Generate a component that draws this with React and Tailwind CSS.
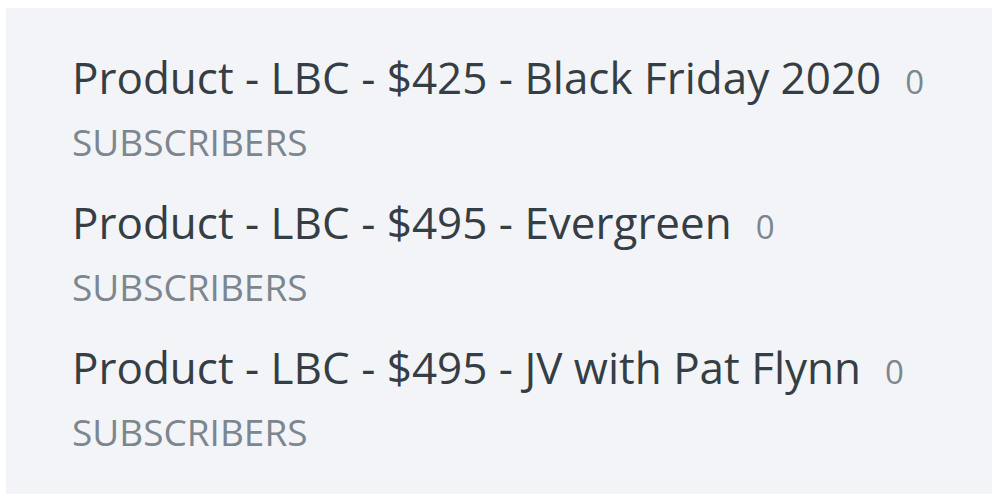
const products = [
  { name: "Product - LBC - $425 - Black Friday 2020", count: 0 },
  { name: "Product - LBC - $495 - Evergreen", count: 0 },
  { name: "Product - LBC - $495 - JV with Pat Flynn", count: 0 },
];

export default function App() {
  return (
    <div className="h-[503px] w-[1000px] bg-white px-[6px] pt-[8px] font-['Open_Sans',sans-serif]">
      <div className="h-[486px] w-[986px] bg-[#f3f4f8] pl-[66px] pt-[39px]">
        {products.map((p) => (
          <ProductRow key={p.name} name={p.name} count={p.count} />
        ))}
      </div>
    </div>
  );
}

function ProductRow({ name, count }) {
  return (
    <div className="h-[145px]">
      <div className="flex items-baseline">
        <span className="text-[44px] leading-[60px] text-[#363e45]">{name}</span>
        <span className="ml-[24px] text-[33px] text-[#7b868f]">{count}</span>
      </div>
      <div className="mt-[10px] text-[37px] leading-[50px] uppercase text-[#7b868f]">Subscribers</div>
    </div>
  );
}
